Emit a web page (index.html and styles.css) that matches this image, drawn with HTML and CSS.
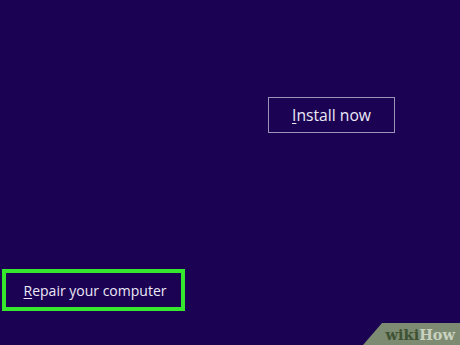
FILE: index.html
```html
<!DOCTYPE html>
<html>
<head>
<meta charset="utf-8">
<link rel="stylesheet" href="styles.css">
</head>
<body>
<div class="screen">
  <div class="top">
    <div class="install"><span class="u">I</span>nstall now</div>
  </div>
  <div class="bottom">
    <div class="repair"><span class="u">R</span>epair your computer</div>
  </div>
  <div class="wm"><span class="wiki">wiki</span><span class="how">How</span></div>
</div>
</body>
</html>
```
FILE: styles.css
```css
html, body { margin: 0; padding: 0; }
body { background: #1b0252; width: 460px; height: 345px; overflow: hidden; }
.screen {
  position: relative;
  width: 460px; height: 345px;
  display: flex; flex-direction: column;
  font-family: "Open Sans", "Noto Sans", sans-serif;
  color: #ece8f8;
}
.top { display: flex; justify-content: flex-end; padding: 97px 65px 0 0; }
.install {
  width: 125px; height: 34px;
  border: 1px solid #9a94b8;
  display: flex; align-items: center; justify-content: center;
  font-size: 15.7px;
}
.u { text-decoration: underline; text-underline-offset: 2px; text-decoration-thickness: 1px; }
.bottom { flex: 1; display: flex; align-items: flex-end; padding: 0 0 34px 2px; }
.repair {
  width: 172px; height: 34px;
  border: 4px solid #35e82e;
  display: flex; align-items: center; justify-content: center;
  padding-left: 3px;
  font-size: 14px;
}
.wm {
  position: absolute; right: 0; bottom: 0;
  width: 97px; height: 22px;
  background: #7d8b72;
  clip-path: polygon(19px 0, 100% 0, 100% 100%, 0 100%);
  display: flex; align-items: center; justify-content: flex-end; padding-right: 5px; box-sizing: border-box;
  font-family: "DejaVu Serif", serif; font-weight: bold; font-size: 14.5px;
}
.wiki { color: #3f5233; }
.how { color: #c9d1bf; }
```
